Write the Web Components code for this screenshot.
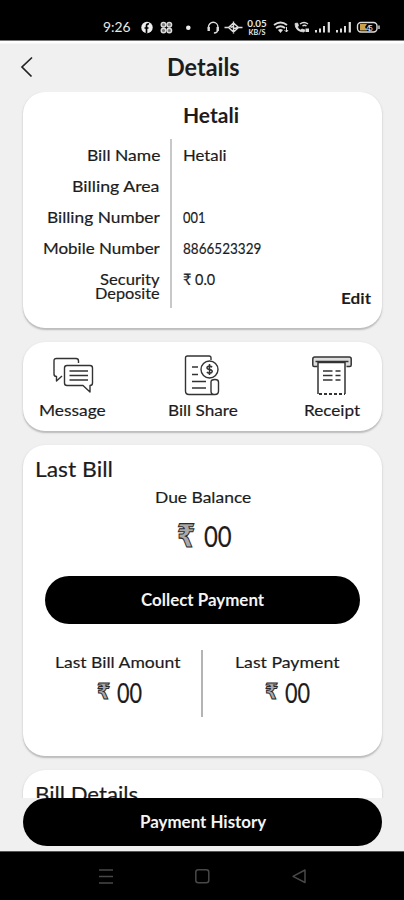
<!DOCTYPE html>
<html lang="en">
<head>
<meta charset="utf-8">
<meta name="viewport" content="width=device-width">
<title>Details</title>
<style>
html,body{margin:0;background:#f0f0f0}
body{font-family:Lato,"Noto Sans",sans-serif;color:#1c1c1c}
</style>
</head>
<body>
<bill-app></bill-app>
<script>
const define = (name, html, ready) => {
  const t = document.createElement('template');
  t.innerHTML = html;
  customElements.define(name, class extends HTMLElement {
    constructor() {
      super();
      this.attachShadow({mode: 'open'}).append(t.content.cloneNode(true));
    }
    connectedCallback() { if (ready) ready(this, this.shadowRoot); }
  });
};

// One line of text of font size s, condensed or widened to a set width w.
const fit = (el, root) => {
  const s = root.querySelector('span'), w = +el.getAttribute('w');
  el.style.fontSize = el.getAttribute('s') + 'px';
  if (el.hasAttribute('weight')) el.style.fontWeight = el.getAttribute('weight');
  el.style.width = w + 'px';
  s.style.transform = 'scaleX(' + w / s.offsetWidth + ')';
};
define('fit-text', `<style>
:host{display:block;white-space:nowrap;flex:none;line-height:20px;height:20px;-webkit-text-stroke:.18px currentColor}
:host([tight]){line-height:13.500px;height:13.500px}
:host([weight]){-webkit-text-stroke:0}
span{display:inline-block;transform-origin:0 50%}
</style><span><slot></slot></span>`, fit);

define('rupee-mark', `<style>
:host{display:block;flex:none;line-height:20px;height:20px;white-space:nowrap;font-family:"DejaVu Sans","Noto Sans",sans-serif;font-weight:700;color:#aaa;-webkit-text-stroke:1.1px #2a2a2a}
span{display:inline-block;transform-origin:0 50%}
</style><span>₹</span>`, fit);

define('status-bar', `<style>
:host{display:block;height:41px;background:#000;border-bottom:1px solid #777;box-sizing:border-box}
svg{display:block}
text{font-family:Lato,sans-serif;fill:#e8e8e8}
</style>
<svg width="404" height="40" viewBox="0 0 404 40" fill="none" stroke="#ddd" stroke-width="1.4">
<text x="103" y="32" font-size="14" textLength="27.5" lengthAdjust="spacingAndGlyphs" stroke="none">9:26</text>
<circle cx="147" cy="27.500" r="5.700" fill="#eee" stroke="none"/>
<path d="M146.500 33v-7q0-2.500 2.500-2M144.500 28h4" stroke="#000" stroke-width="1.700"/>
<g fill="#777"><circle cx="163.500" cy="24.700" r="2.300"/><circle cx="169.300" cy="24.700" r="2.300"/><circle cx="163.500" cy="30.500" r="2.300"/><circle cx="169.300" cy="30.500" r="2.300"/></g>
<circle cx="188.300" cy="27.700" r="2.300" fill="#eee" stroke="none"/>
<path d="M208.500 29v-2a4.700 4.700 0 0 1 9.400 0v2q0 4-4 4"/><path d="M208.700 27v4M217.700 27v4" stroke-width="2.400"/>
<path d="M224.500 27.500h4l5-4.500 5 4.500h4M228.500 27.500l5 4.500 5-4.500M230.500 27.500l2-1 2 2 3-1M233.500 21.500v12"/>
<text x="247.300" y="26.500" font-size="8.500" font-weight="700" textLength="19.500" lengthAdjust="spacingAndGlyphs" stroke="none">0.05</text>
<text x="248.500" y="34.500" font-size="6.500" font-weight="700" textLength="17" lengthAdjust="spacingAndGlyphs" stroke="none">KB/S</text>
<path d="M274 25q6.500-5 13 0M276 28q4.500-3.500 9 0" stroke-width="1.800"/><path d="M278 30q2.500-2 5 0l-2.500 3z" fill="#ddd" stroke="none"/><path d="M286.500 27v5M284.500 30l2 2 1.500-2" stroke-width="1"/>
<path d="M295 23.500q0 8 9 8.500l1-2-3-1-1.500 1q-2.500-1-3-3l1-1.500-1-2.500z" fill="#ddd" stroke-width=".8"/><path d="M300 24q4-3 8 0M302.500 26q2-1.500 4 0"/><rect x="305.500" y="28.500" width="3.500" height="3.500" fill="#ddd" stroke="none"/>
<g fill="#ddd" stroke="none"><path d="M315 30h2v2.500h-2zM319 28.500h2V32.500h-2zM323 26h2v6.500h-2zM327.700 22h2.200v10.500h-2.200zM336 30h2v2.500h-2zM340 28.500h2V32.500h-2zM344 26h2v6.500h-2zM348.700 22h2.200v10.500h-2.200z"/></g>
<rect x="357.500" y="22.500" width="19.500" height="9.500" rx="3.500"/><path d="M379 25.500v3.500"/><path d="M360 24h7l-2 3 2 3.500h-7z" fill="#c9a24b" stroke="none"/>
<text x="366" y="30.500" font-size="8" stroke="none" textLength="7">45</text>
</svg>`);

define('app-header', `<style>
:host{display:grid;grid-template-columns:166.500px auto 1fr;height:51px;align-items:start;background:linear-gradient(#fff 2px,#f0f0f0 3px)}
svg{margin:15px 0 0 20px}
fit-text{margin-top:16px}
</style><svg width="14" height="22" fill="none" stroke="#222" stroke-width="1.700"><path d="M12 1.500 2 11l9.500 9.500"/></svg><fit-text w="73" s="24" weight="700"><slot></slot></fit-text>`);

define('ui-card', `<style>
:host{display:block;box-sizing:border-box;background:#fff;border-radius:22px;box-shadow:0 1.500px 1.500px #bdbdbd,0 1px 3px #ddd}
</style><slot></slot>`);

define('detail-row', `<style>
:host{display:grid;grid-template-columns:136.500px 1fr;column-gap:23.500px;height:31.100px}
.k{display:flex;flex-direction:column;align-items:flex-end}
</style><div class="k"><slot name="label"></slot></div><slot></slot>`);

define('action-item', `<style>
:host{display:flex;flex-direction:column;align-items:center}
::slotted(svg){display:block;height:44px;margin:1px 0 3px}
</style><slot name="icon"></slot><slot></slot>`);

define('pill-button', `<style>
:host{display:flex;justify-content:center;box-sizing:border-box;height:47.500px;border-radius:24px;background:#000;color:#f4f4f4;padding-top:14px}
</style><slot></slot>`);

define('amount-line', `<style>
:host{display:flex}
</style><slot></slot>`);

define('nav-bar', `<style>
:host{display:grid;grid-template-columns:99px 14px 82px 15px 82px 15px;background:#000;height:49px;padding-top:17px;box-sizing:border-box;border-top:1px solid #555}
svg{display:block;fill:none;stroke:#484848;stroke-width:1.500}
</style><i></i><svg width="14" height="15"><path d="M0 1h14M0 7.500h14M0 14h14"/></svg><i></i><svg width="15" height="15"><rect x=".8" y=".8" width="13" height="13" rx="2.500"/></svg><i></i><svg width="15" height="15"><path d="M13 1v12.500L1 7.300z" stroke-linejoin="round"/></svg>`);

define('bill-app', `<style>
:host{display:grid;grid-template-rows:41px 51px 706px 53px 49px;width:404px;height:900px;overflow:hidden;background:#f0f0f0}
main{padding:0 22px 0 23px;overflow:hidden;display:flex;flex-direction:column}
ui-card{flex:none}
.info{height:236px;margin-bottom:14px}
.name{margin:13px 0 0 160px}
.rows{margin-top:14px;height:169px;background:linear-gradient(90deg,transparent 147px,#c8c8c8 147px,#c8c8c8 149.500px,transparent 149.500px);padding-top:5.500px;box-sizing:border-box}
.one{margin-top:3.500px}
.edit{margin:-20px 0 0 318px}
.actions{height:89px;margin-bottom:14px}
.in{display:grid;grid-template-columns:67px 61.500px 69.500px 67px 56.500px;padding:10px 0 0 16px}
.last{height:311px;margin-bottom:14px}
.h{padding:14px 0 0 11.500px}
.due{margin:8px 0 0 132px}
.big{margin:18.500px 0 0 154px;gap:8.500px}
.pay{margin:30px 22px 0}
.big fit-text{margin-top:.5px}
.split{display:grid;grid-template-columns:178px 2px 1fr;margin-top:26px;height:67px}
.split i{background:#b4b4b4}
.split fit-text{margin:2px 0 0 32px}
.split amount-line{margin:10.500px 0 0 74px;gap:7px}
.split amount-line fit-text{margin:.5px 0 0}
.split div:last-child amount-line{margin-left:62px}
footer{padding:0 22px 0 23px}
</style>
<status-bar></status-bar>
<app-header>Details</app-header>
<main>
<ui-card class="info"><div style="display:flow-root">
<fit-text class="name" w="56" s="21" weight="700">Hetali</fit-text>
<div class="rows">
<detail-row><fit-text slot="label" w="73" s="15.800">Bill Name</fit-text><fit-text w="43.500" s="15.800">Hetali</fit-text></detail-row>
<detail-row><fit-text slot="label" w="87.500" s="15.800">Billing Area</fit-text></detail-row>
<detail-row><fit-text slot="label" w="113" s="15.800">Billing Number</fit-text><fit-text w="22.500" s="16">001</fit-text></detail-row>
<detail-row><fit-text slot="label" w="117" s="15.800">Mobile Number</fit-text><fit-text w="78.500" s="16">8866523329</fit-text></detail-row>
<detail-row><fit-text class="one" tight slot="label" w="60" s="15.800">Security</fit-text><fit-text tight slot="label" w="65" s="15.800">Deposite</fit-text><fit-text w="32.500" s="16">₹ 0.0</fit-text></detail-row>
</div>
<fit-text class="edit" w="30" s="16" weight="700">Edit</fit-text>
</div></ui-card>
<ui-card class="actions"><div class="in">
<action-item><svg slot="icon" width="42" height="44" fill="none" stroke="#333" stroke-width="1.400" stroke-linejoin="round"><path d="M26.500 10V8q0-2.500-2.500-2.500H4.500Q2 5.500 2 8v13q0 2.500 2.500 2.500V28l5.500-5"/><path d="M15 12.500h23q2.500 0 2.500 2.500v15q0 2.500-2.500 2.500v6.500L31 32.500H15q-2.500 0-2.500-2.500V15q0-2.500 2.500-2.500zM17.500 18H36M17.500 22.500H36M17.500 27H36"/></svg><fit-text w="67" s="15.800">Message</fit-text></action-item><i></i>
<action-item><svg slot="icon" width="36" height="44" fill="none" stroke="#333" stroke-width="1.400" stroke-linejoin="round"><path d="M27 7V5q0-2-2-2H3.500q-2 0-2 2V38q0 3.500 3.500 3.500h26q3.500 0 3.500-3.500V29q0-2.500-3.500-2.500-4 0-4 2.500V38q0 3.500 3 3.500"/><circle cx="25.500" cy="16.500" r="8.500" fill="#fff"/><path d="M28.200 14.200q-2.700-2-4.900-.3-1.300 2 2.200 2.700 4 .8 2.200 2.900-2.300 1.500-4.900-.4M25.500 11v11" stroke-width="1.500"/><path d="M8 14h6M8 21.500h6M8 28.500h14M8 35h14"/></svg><fit-text w="69.500" s="15.800">Bill Share</fit-text></action-item><i></i>
<action-item><svg slot="icon" width="40" height="44" fill="none" stroke="#333" stroke-width="1.500" stroke-linejoin="round"><path d="M5.500 13.500H2Q.8 13.500.8 12V6q0-2 2-2h34.400q2 0 2 2v6q0 1.500-1.500 1.500H34.500" fill="#ddd"/><path d="M6 41V9.500h27V41" fill="#fff"/><path d="M3.500 8.500h33"/><path d="M7 41h26" stroke-width="2" stroke-dasharray="3 2"/><path d="M11 18h9.500M23.500 18h5M11 22.500h9.500M23.500 22.500h5M11 27h9.500M23.500 27h5" stroke-width="1.700"/></svg><fit-text w="56.500" s="15.800">Receipt</fit-text></action-item>
</div></ui-card>
<ui-card class="last"><div style="display:flow-root">
<div class="h"><fit-text w="78" s="22">Last Bill</fit-text></div>
<fit-text class="due" w="96" s="16">Due Balance</fit-text>
<amount-line class="big"><rupee-mark w="18" s="32"></rupee-mark><fit-text w="28" s="29">00</fit-text></amount-line>
<pill-button class="pay"><fit-text w="123" s="16.500" weight="700">Collect Payment</fit-text></pill-button>
<div class="split">
<div><fit-text w="126" s="16">Last Bill Amount</fit-text><amount-line><rupee-mark w="13" s="22"></rupee-mark><fit-text w="25" s="26">00</fit-text></amount-line></div>
<i></i>
<div><fit-text w="104" s="16">Last Payment</fit-text><amount-line><rupee-mark w="13" s="22"></rupee-mark><fit-text w="25" s="26">00</fit-text></amount-line></div>
</div>
</div></ui-card>
<ui-card style="height:100px;border-radius:22px 22px 0 0"><div class="h"><fit-text w="103" s="22">Bill Details</fit-text></div></ui-card>
</main>
<footer><pill-button><fit-text w="126" s="16.500" weight="700">Payment History</fit-text></pill-button></footer>
<nav-bar></nav-bar>`);
</script>
</body>
</html>
